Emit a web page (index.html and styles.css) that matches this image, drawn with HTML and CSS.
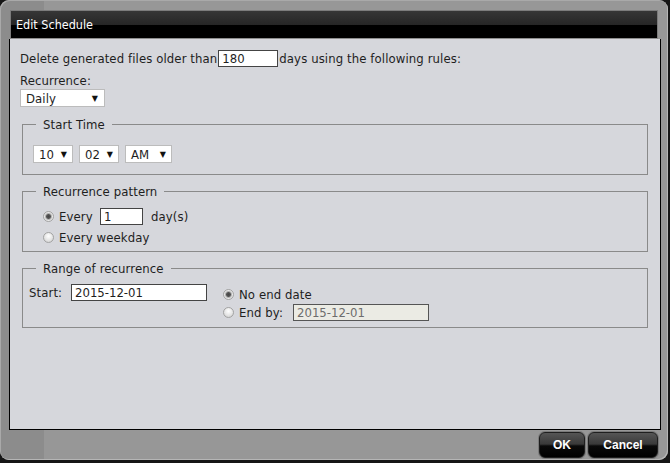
FILE: index.html
```html
<!DOCTYPE html>
<html lang="en">
<head>
	<meta charset="UTF-8">
	<title>Edit Schedule</title>
	<link rel="stylesheet" href="styles.css">
</head>
<body>
	<div class="dialog">
		<div class="title">Edit Schedule</div>
		<div class="panel">
			<div class="line first">Delete generated files older than<input class="field days" type="text" value="180">days using the following rules:</div>
			<div class="line label">Recurrence:</div>
			<div class="select daily"><span>Daily</span><span class="arrow">&#9660;</span></div>

			<fieldset class="group time">
				<legend>Start Time</legend>
				<div class="selects">
					<div class="select hour"><span>10</span><span class="arrow">&#9660;</span></div>
					<div class="select min"><span>02</span><span class="arrow">&#9660;</span></div>
					<div class="select ampm"><span>AM</span><span class="arrow">&#9660;</span></div>
				</div>
			</fieldset>

			<fieldset class="group pattern">
				<legend>Recurrence pattern</legend>
				<div class="opt tall"><span class="radio on"></span><span class="every-lbl">Every</span><input class="field every" type="text" value="1"><span class="unit">day(s)</span></div>
				<div class="opt second"><span class="radio"></span>Every weekday</div>
			</fieldset>

			<fieldset class="group range">
				<legend>Range of recurrence</legend>
				<div class="range-row">
					<div class="start"><span class="lbl">Start:</span><input class="field date" type="text" value="2015-12-01"></div>
					<div class="ends">
						<div class="opt end-row"><span class="radio on"></span>No end date</div>
						<div class="opt end-row"><span class="radio"></span><span class="endby">End by:</span><input class="field date off" type="text" value="2015-12-01" disabled></div>
					</div>
				</div>
			</fieldset>
		</div>
		<div class="footer">
			<button class="btn ok">OK</button>
			<button class="btn cancel">Cancel</button>
		</div>
	</div>
</body>
</html>
```

FILE: styles.css
```css
*{
	margin: 0;
	padding: 0;
	box-sizing: border-box;
}
body{
	background-color: #161616;
	font-family: "DejaVu Sans Condensed", "DejaVu Sans", Tahoma, sans-serif;
	font-size: 13px;
	letter-spacing: 0.1px;
	color: #1e1e1e;
}
.dialog{
	width: 668px;
	height: 460px;
	padding: 10px 7px 0 9px;
	background: linear-gradient(to right, #8c8c8c 44px, #979797 44px);
	border-radius: 9px;
	box-shadow: inset 1px 1px 0 #a9a9a9, inset -1px -1px 0 #b5b5b5;
}
/* title bar */
.title{
	height: 29px;
	margin: 0 3px 0 1px;
	padding-left: 5px;
	border: 1px solid #7c7c7c;
	border-bottom-color: #8e8e8e;
	background: linear-gradient(#363636, #262626 52%, #000 52%, #000);
	color: #fff;
	font-size: 12.5px;
	letter-spacing: 0;
	line-height: 28px;
}
.panel{
	height: 391px;
	padding: 11px 10px 0;
	background-color: #d6d7dc;
	border: 1px solid #000;
	border-top: none;
}
.line{
	display: flex;
	align-items: center;
	height: 17px;
}
.label{
	height: 15px;
	margin-top: 6px;
}
.field{
	height: 17px;
	padding: 0 3px;
	border: 1px solid #444;
	background-color: #fff;
	font-family: inherit;
	font-size: 13px;
	color: #1e1e1e;
	outline: none;
}
.days{
	width: 60px;
	margin: 0 1px;
}
/* select boxes */
.select{
	display: flex;
	align-items: center;
	justify-content: space-between;
	height: 18px;
	padding: 0 5px 0 5px;
	border: 1px solid #bcbcbc;
	background-color: #fff;
}
.select .arrow{
	font-family: "DejaVu Sans", sans-serif;
	font-size: 8px;
	color: #111;
}
.daily{
	width: 85px;
	margin-top: 1px;
	padding-right: 6px;
}
.selects{
	display: flex;
	gap: 6px;
}
.hour,
.min{
	width: 40px;
}
.ampm{
	width: 47px;
}
/* groups */
.group{
	margin: 10px 2px 0;
	padding: 13px 10px 11px;
	border: 1px solid #8a8a8a;
}
.group legend{
	margin-left: 3px;
	padding: 0 7px;
	line-height: 15px;
}
.pattern{
	margin-top: 9px;
	padding: 8px 10px 6px;
}
.range{
	margin-top: 9px;
	padding: 8px 10px 6px 5px;
}
.range legend{
	margin-left: 8px;
}
.opt{
	display: flex;
	align-items: center;
	height: 16px;
}
.pattern .opt{
	margin-left: 10px;
}
.tall{
	height: 18px;
}
.second{
	margin-top: 4px;
}
.radio{
	width: 11px;
	height: 11px;
	margin-right: 5px;
	border: 1px solid #a3a3a3;
	border-radius: 50%;
	background: radial-gradient(circle at 50% 35%, #fff, #e2e2e2 60%, #c9c9c9);
}
.radio.on{
	background: radial-gradient(circle, #444 0, #555 2px, #9a9a9a 2.6px, #e9e9e9 4px, #d4d4d4);
}
.every-lbl{
	width: 41px;
}
.every{
	width: 43px;
	margin-right: 8px;
}
.range-row{
	display: flex;
}
.start{
	display: flex;
	align-items: center;
	height: 17px;
}
.lbl{
	width: 43px;
	padding-left: 1px;
}
.date{
	width: 136px;
}
.ends{
	margin: 1px 0 0 16px;
}
.end-row{
	height: 18px;
}
.endby{
	width: 54px;
}
.off{
	background-color: #ebebe4;
	color: #6d6d6d;
	border-color: #555;
}
/* buttons */
.footer{
	display: flex;
	justify-content: flex-end;
	gap: 3px;
	padding: 2px 3px 0 0;
}
.btn{
	height: 26px;
	border: 1px solid #1e1e1e;
	border-radius: 6px;
	background: linear-gradient(#555, #3a3a3a 46%, #0a0a0a 54%, #000);
	box-shadow: 0 0 0 1px #7a7a7a;
	color: #fff;
	font-family: "Liberation Sans", Arial, sans-serif;
	font-size: 12px;
	font-weight: bold;
	letter-spacing: 0;
}
.ok{
	width: 46px;
}
.cancel{
	width: 70px;
}
```
